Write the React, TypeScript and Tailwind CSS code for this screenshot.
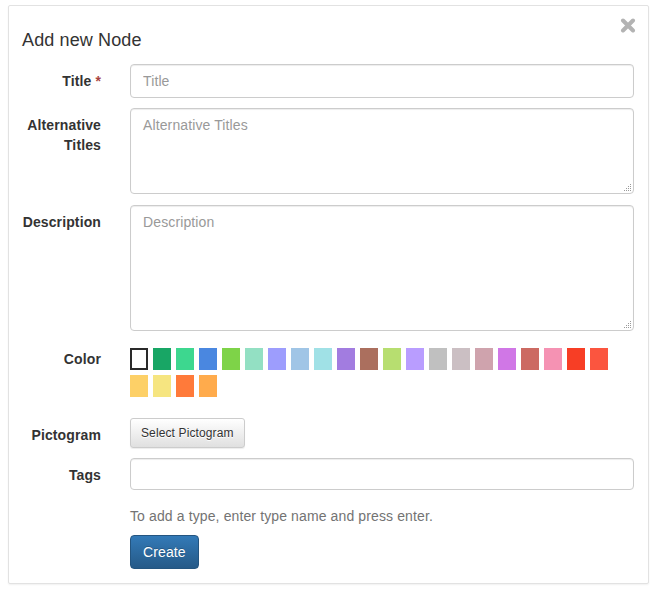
import React from "react";

const swatches = [
  "bg-white border-2 border-[#2a2a2a]",
  "bg-[#18a665]",
  "bg-[#3dd78f]",
  "bg-[#4a87e0]",
  "bg-[#7ed348]",
  "bg-[#93e0c3]",
  "bg-[#9d9dfd]",
  "bg-[#a0c5e6]",
  "bg-[#a0e1e6]",
  "bg-[#a27ce0]",
  "bg-[#ab6f5e]",
  "bg-[#b7de70]",
  "bg-[#b99dff]",
  "bg-[#c0c0c0]",
  "bg-[#cbbfc3]",
  "bg-[#cfa3ad]",
  "bg-[#d077e6]",
  "bg-[#cc6a62]",
  "bg-[#f592b3]",
  "bg-[#f73e25]",
  "bg-[#fb553f]",
  "bg-[#fdd067]",
  "bg-[#f6e580]",
  "bg-[#ff7a3a]",
  "bg-[#ffab4c]",
];

function Label({ children }: { children?: React.ReactNode }) {
  return (
    <label className="w-[79px] shrink-0 pt-[7px] text-right text-[14px] font-bold leading-[20px] text-[#333]">
      {children}
    </label>
  );
}

function Grip() {
  const dots: [number, number][] = [];
  for (let r = 0; r < 4; r++) {
    for (let c = 0; c <= r; c++) {
      dots.push([8 - c * 2, 2 + r * 2]);
    }
  }
  return (
    <svg className="pointer-events-none absolute bottom-[2px] right-[2px]" width="10" height="10" viewBox="0 0 10 10">
      {dots.map(([x, y], i) => (
        <rect key={i} x={x} y={y} width="1" height="1" fill="#9a9a9a" />
      ))}
    </svg>
  );
}

const fieldCls =
  "w-full rounded-[4px] border border-[#ccc] px-[12px] py-[6px] text-[14px] leading-[20px] text-[#555] shadow-[inset_0_1px_1px_rgba(0,0,0,0.075)] outline-none placeholder:text-[#999]";

export default function App() {
  return (
    <div className="min-h-screen bg-white pl-[8px] pt-[5px] font-['Liberation_Sans',Arial,sans-serif] tracking-[0.12px]">
      <div className="relative w-[641px] rounded-[2px] border border-[#e2e2e2] bg-white pb-[14px] pl-[13px] pr-[14px] pt-[21px] shadow-[0_1px_2px_rgba(0,0,0,0.06)]">
        <button className="absolute right-[12px] top-[11px] flex h-[16px] w-[16px] items-center justify-center">
          <svg width="16" height="15" viewBox="0 0 16 15">
            <path d="M3 2.5 L13 12.5 M13 2.5 L3 12.5" stroke="#b3b3b3" strokeWidth="4" strokeLinecap="round" />
          </svg>
        </button>
        <h4 className="text-[18px] leading-[26px] text-[#333]">Add new Node</h4>

        <div className="mt-[11px] flex">
          <Label>
            Title <span className="text-[#a94442]">*</span>
          </Label>
          <div className="ml-[29px] flex-1">
            <input placeholder="Title" className={`h-[34px] ${fieldCls}`} />
          </div>
        </div>

        <div className="mt-[10px] flex">
          <Label>Alternative Titles</Label>
          <div className="relative ml-[29px] flex flex-1">
            <textarea placeholder="Alternative Titles" className={`h-[86px] resize-none ${fieldCls}`} />
            <Grip />
          </div>
        </div>

        <div className="mt-[11px] flex">
          <Label>Description</Label>
          <div className="relative ml-[29px] flex flex-1">
            <textarea placeholder="Description" className={`h-[126px] resize-none ${fieldCls}`} />
            <Grip />
          </div>
        </div>

        <div className="mt-[11px] flex">
          <Label>Color</Label>
          <div className="ml-[29px] mt-[6px] flex w-[504px] flex-wrap gap-y-[5px]">
            {swatches.map((c, i) => (
              <div key={i} className={`mr-[5px] h-[22px] w-[18px] ${c}`} />
            ))}
          </div>
        </div>

        <div className="mt-[21px] flex">
          <Label>Pictogram</Label>
          <div className="ml-[29px] flex-1">
            <button className="h-[30px] rounded-[3px] border border-[#ccc] bg-gradient-to-b from-white to-[#e0e0e0] px-[10px] text-[12px] leading-[18px] text-[#333] shadow-[inset_0_1px_0_rgba(255,255,255,0.15),0_1px_1px_rgba(0,0,0,0.075)] [text-shadow:0_1px_0_#fff]">
              Select Pictogram
            </button>
          </div>
        </div>

        <div className="mt-[10px] flex">
          <Label>Tags</Label>
          <div className="ml-[29px] flex-1">
            <div className="h-[32px] w-full rounded-[4px] border border-[#ccc] bg-white shadow-[inset_0_1px_1px_rgba(0,0,0,0.075)]" />
          </div>
        </div>

        <div className="mt-[16px] flex">
          <div className="w-[79px] shrink-0" />
          <div className="ml-[29px] flex-1">
            <p className="text-[14px] leading-[20px] text-[#737373]">
              To add a type, enter type name and press enter.
            </p>
            <button className="mt-[9px] h-[34px] rounded-[4px] border border-[#245580] bg-gradient-to-b from-[#337ab7] to-[#265a88] px-[12px] text-[14px] leading-[20px] text-white [text-shadow:0_-1px_0_rgba(0,0,0,0.2)]">
              Create
            </button>
          </div>
        </div>
      </div>
    </div>
  );
}
